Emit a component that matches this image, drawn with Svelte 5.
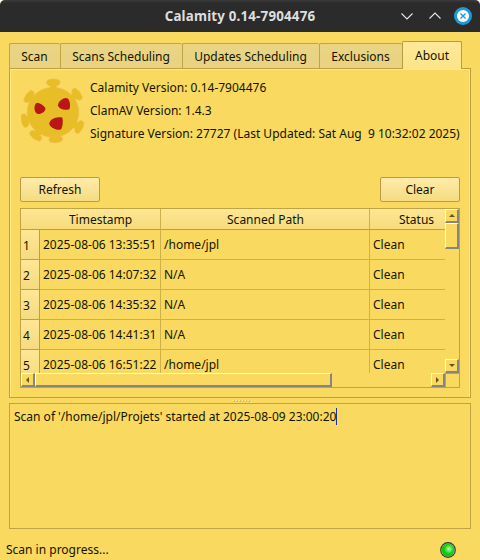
<script>
  const tabs = [
    { label: 'Scan', width: 51 },
    { label: 'Scans Scheduling', width: 122 },
    { label: 'Updates Scheduling', width: 137 },
    { label: 'Exclusions', width: 83 },
    { label: 'About', width: 60, active: true }
  ];
  const rows = [
    ['2025-08-06 13:35:51', '/home/jpl', 'Clean'],
    ['2025-08-06 14:07:32', 'N/A', 'Clean'],
    ['2025-08-06 14:35:32', 'N/A', 'Clean'],
    ['2025-08-06 14:41:31', 'N/A', 'Clean'],
    ['2025-08-06 16:51:22', '/home/jpl', 'Clean']
  ];
  const spikes = [
    [53.3, 79, 0],
    [79.8, 92.2, 53],
    [82.5, 128.500, 116],
    [56, 142.700, 176],
    [33.500, 138.500, 218],
    [21.300, 121.500, 256],
    [26.200, 94.500, 306]
  ];
</script>

<div class="window">
  <header class="titlebar">
    <span class="title">Calamity 0.14-7904476</span>
    <svg class="controls" width="80" height="32" viewBox="400 0 80 32">
      <path d="M401.500 13.500l5.500 5.500l5.500-5.500M429.500 18.500l5.500-5.500l5.500 5.500" fill="none" stroke="#e6e6e6" stroke-width="1.100" />
      <circle cx="463" cy="16" r="9" fill="#1d99d8" />
      <circle cx="463" cy="16" r="6" fill="#fff" />
      <path d="M460.500 13.500l5 5M465.500 13.500l-5 5" stroke="#1d99d8" stroke-width="1.300" />
    </svg>
  </header>

  <nav class="tabs">
    {#each tabs as tab}
      <div class="tab" class:active={tab.active} style="width: {tab.width}px">{tab.label}</div>
    {/each}
  </nav>

  <section class="panel">
    <div class="about">
      <svg class="logo" width="64" height="66" viewBox="21 78 64 66">
        <g fill="#e8be26" stroke="#f3b94a" stroke-width="0.700">
          {#each spikes as [x, y, angle]}
            <path transform="translate({x} {y}) rotate({angle})" d="M-3 11V7.500C-3.300 6.200-4.500 6.600-5.600 5.800C-7 4.800-7.100 1.800-5.300 1C-4.200 .5-3.700 1-3 .6C-1.600-.1 1.600-.1 3 .6C3.700 1 4.200 .5 5.300 1C7.100 1.800 7 4.800 5.600 5.800C4.500 6.600 3.300 6.200 3 7.500V11Z" />
          {/each}
          <ellipse cx="53" cy="112.300" rx="25.800" ry="24.900" />
        </g>
        {#each spikes as [x, y, angle]}
          <path transform="translate({x} {y}) rotate({angle})" d="M-2.650 6.500H2.650V13H-2.650Z" fill="#e8be26" />
        {/each}
        <g fill="#b91616">
          <path d="M36.200 103.300C39 102.300 44 105.500 45.500 108.400C45 112 41 114.500 37 113.800C34 112 33.600 105.500 36.200 103.300Z" />
          <path d="M66.500 98.100C69.500 98.600 71 105 69.400 109.200C65 110.800 59.500 109.500 57.900 105.500C58.300 101.500 62.500 98 66.500 98.100Z" />
          <path d="M62.300 117.600C63.300 121 62.700 126 61.200 129.200C57.500 131.200 50.500 128 49.300 124C49 119.500 56 116 62.300 117.600Z" />
        </g>
      </svg>
      <div class="versions">
        <div>Calamity Version: 0.14-7904476</div>
        <div>ClamAV Version: 1.4.3</div>
        <div>Signature Version: 27727 (Last Updated: Sat Aug&nbsp; 9 10:32:02 2025)</div>
      </div>
    </div>

    <div class="actions">
      <button>Refresh</button>
      <button>Clear</button>
    </div>

    <div class="table">
      <div class="viewport">
        <div class="row head">
          <span class="stamp">Timestamp</span><span class="path">Scanned Path</span><span class="status">Status</span>
        </div>
        {#each rows as row, i}
          <div class="row">
            <span class="num">{i + 1}</span><span class="stamp">{row[0]}</span><span class="path">{row[1]}</span><span class="status">{row[2]}</span>
          </div>
        {/each}
      </div>
      <div class="vbar">
        <div class="bevel arrow"><svg width="6" height="3"><path d="M0 3L3 0L6 3Z" /></svg></div>
        <div class="bevel vthumb"></div>
        <div class="bevel arrow end"><svg width="6" height="3"><path d="M0 0H6L3 3Z" /></svg></div>
      </div>
      <div class="hbar">
        <div class="bevel arrow"><svg width="3" height="6"><path d="M3 0V6L0 3Z" /></svg></div>
        <div class="bevel hthumb"></div>
        <div class="bevel arrow end"><svg width="3" height="6"><path d="M0 0L3 3L0 6Z" /></svg></div>
      </div>
      <div class="corner"></div>
    </div>
  </section>

  <div class="grip">{#each Array(6) as _}<i></i>{/each}</div>

  <section class="log"><span>Scan of '/home/jpl/Projets' started at 2025-08-09 23:00:20</span><i class="caret"></i></section>

  <footer>
    <span>Scan in progress...</span>
    <svg width="16" height="16" viewBox="0 0 16 16">
      <defs>
        <radialGradient id="led" cx="0.580" cy="0.420" r="0.600">
          <stop offset="0" stop-color="#b4f8b0" />
          <stop offset="0.250" stop-color="#78ea74" />
          <stop offset="0.600" stop-color="#18d018" />
          <stop offset="1" stop-color="#00c000" />
        </radialGradient>
      </defs>
      <circle cx="8" cy="8" r="7.900" fill="#303a28" />
      <circle cx="8" cy="8" r="6.800" fill="#9bbd91" />
      <circle cx="8" cy="8" r="6.200" fill="url(#led)" />
    </svg>
  </footer>
</div>

<style>
  :global(body) { margin: 0; background: #fff; }
  .window {
    box-sizing: border-box;
    width: 480px;
    height: 560px;
    display: flex;
    flex-direction: column;
    overflow: hidden;
    background: #f9d95f;
    border-radius: 5px 5px 0 0;
    color: #141400;
    font: 12px/18px "Noto Sans", sans-serif;
    white-space: nowrap;
  }
  .window * { box-sizing: border-box; }
  .titlebar {
    position: relative;
    flex: none;
    height: 32px;
    background: linear-gradient(#3b3b3b, #2b2b2b 3px);
    color: #dedede;
    font-size: 13.333px;
    font-weight: 700;
    letter-spacing: 0.19px;
    text-align: center;
    line-height: 32px;
  }
  .controls { position: absolute; right: 0; top: 0; }
  .tabs {
    position: relative;
    z-index: 1;
    flex: none;
    display: flex;
    align-items: flex-start;
    height: 36px;
    padding: 11px 0 0 9px;
  }
  .tab {
    height: 25px;
    border: solid #c0a545;
    border-width: 1px 0 0 1px;
    border-radius: 2px 2px 0 0;
    background: linear-gradient(#ead584, #e9d281);
    text-align: center;
    padding-right: 1px;
    line-height: 25px;
  }
  .tab.active {
    height: 28px;
    margin-top: -2px;
    padding-right: 0;
    border-width: 1px 1px 0;
    border-color: #b69b40;
    background: linear-gradient(#ffe899, #fde488);
    line-height: 27px;
  }
  .panel {
    flex: none;
    height: 330px;
    margin: 0 9px;
    border: 1px solid #bda040;
    box-shadow: inset 1px 1px #fee888, inset -1px 0 #fee888;
    padding: 9px 10px 0;
  }
  .about { display: flex; height: 99px; }
  .logo { flex: none; margin-left: 1px; }
  .versions { margin: -2px 0 0 5px; line-height: 23px; }
  .actions { display: flex; justify-content: space-between; height: 31px; }
  button {
    width: 80px;
    height: 25px;
    padding: 0;
    border: 1px solid #b89d45;
    border-radius: 2px;
    background: linear-gradient(#feebaa, #f5dc80);
    color: inherit;
    font: inherit;
    line-height: 22px;
  }
  .table {
    display: grid;
    grid-template: 164px 14px / 424px 14px;
    width: 440px;
    height: 180px;
    border: 1px solid #c0a343;
  }
  .viewport { overflow: hidden; }
  .row { display: flex; height: 30px; }
  .row span {
    flex: none;
    border: solid #cfb14c;
    border-width: 0 1px 1px 0;
    padding-left: 3px;
    line-height: 29px;
  }
  .row .num {
    width: 19px;
    padding: 1px 0 0 2px;
    border-color: #bd9f40;
    background: linear-gradient(#fee694, #f5db80);
  }
  .row .stamp { width: 121px; }
  .row .path { width: 209px; }
  .row .status { width: 94px; }
  .row.head { height: 21px; background: linear-gradient(#fee694, #f6db7b); }
  .row.head span {
    padding: 0 0 0 1px;
    border-bottom-color: #bd9f40;
    line-height: 21px;
    text-align: center;
  }
  .row.head .stamp { width: 140px; padding-left: 20px; }
  .row.head .status { padding: 0; }
  .vbar { display: flex; flex-direction: column; }
  .hbar { display: flex; }
  .bevel {
    border: solid;
    border-width: 1px 2px 2px 1px;
    border-color: #fff #858585 #858585 #fff;
  }
  .arrow {
    flex: none;
    width: 14px;
    height: 14px;
    display: flex;
    align-items: center;
    justify-content: center;
    fill: #655322;
  }
  .vthumb { height: 26px; }
  .hthumb { width: 297px; }
  .vbar .end { margin-top: auto; }
  .hbar .end { margin-left: auto; }
  .corner { border: solid #c0a343; border-width: 1px 0 0 1px; }
  .grip {
    flex: none;
    height: 5px;
    display: flex;
    justify-content: center;
    gap: 1px;
    padding: 2px 0 0 3px;
  }
  .grip i { width: 2px; height: 2px; background: linear-gradient(135deg, #fff3bd 50%, #dfbe56 50%); }
  .log {
    flex: none;
    display: flex;
    height: 126px;
    margin: 0 9px;
    padding: 4px;
    border: 1px solid #c0a343;
  }
  .caret { width: 1px; height: 17px; background: #1734a0; }
  footer {
    flex: 1;
    display: flex;
    align-items: center;
    justify-content: space-between;
    padding: 10px 24px 0 6px;
  }
</style>
